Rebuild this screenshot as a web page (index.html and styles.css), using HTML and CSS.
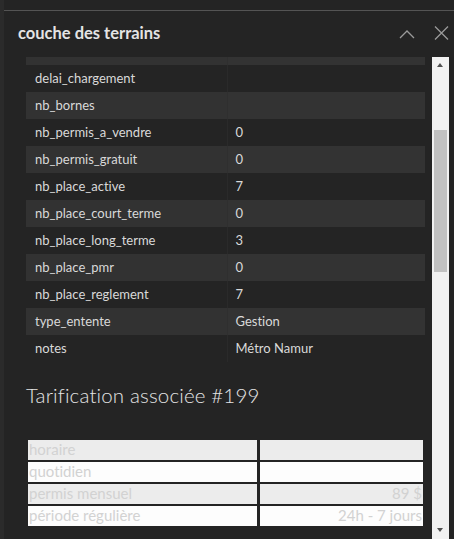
FILE: index.html
```html
<!DOCTYPE html>
<html lang="fr">
<head>
<meta charset="utf-8">
<title>couche des terrains</title>
<link rel="stylesheet" href="styles.css">
</head>
<body>
<div class="rail"></div>
<div class="panel">
  <div class="topbar"></div>
  <div class="header">
    <h1 class="title">couche des terrains</h1>
    <div class="actions">
      <svg class="ico chev" width="16" height="10" viewBox="0 0 16 10"><path d="M1 9 L8 2 L15 9" fill="none" stroke="#9a9a9a" stroke-width="1.3"/></svg>
      <svg class="ico close" width="15" height="14" viewBox="0 0 15 14"><path d="M1 0.5 L14 13.5 M14 0.5 L1 13.5" fill="none" stroke="#9a9a9a" stroke-width="1.3"/></svg>
    </div>
  </div>
  <div class="body">
    <div class="content">
      <div class="scroller">
        <table class="attrs">
          <tr class="partial"><td></td><td></td></tr>
          <tr><td>delai_chargement</td><td></td></tr>
          <tr><td>nb_bornes</td><td></td></tr>
          <tr><td>nb_permis_a_vendre</td><td>0</td></tr>
          <tr><td>nb_permis_gratuit</td><td>0</td></tr>
          <tr><td>nb_place_active</td><td>7</td></tr>
          <tr><td>nb_place_court_terme</td><td>0</td></tr>
          <tr><td>nb_place_long_terme</td><td>3</td></tr>
          <tr><td>nb_place_pmr</td><td>0</td></tr>
          <tr><td>nb_place_reglement</td><td>7</td></tr>
          <tr><td>type_entente</td><td>Gestion</td></tr>
          <tr><td>notes</td><td>Métro Namur</td></tr>
        </table>
        <h2 class="subtitle">Tarification associée #199</h2>
        <div class="tarifs">
          <div class="cell grey">horaire</div><div class="cell grey num"></div>
          <div class="cell white">quotidien</div><div class="cell white num"></div>
          <div class="cell grey">permis mensuel</div><div class="cell grey num">89 $</div>
          <div class="cell white">période régulière</div><div class="cell white num">24h - 7 jours</div>
        </div>
      </div>
    </div>
    <div class="scrollbar">
      <div class="arrow up"></div>
      <div class="track"><div class="thumb"></div></div>
      <div class="arrow down"></div>
    </div>
    <div class="edge"></div>
  </div>
</div>
</body>
</html>
```

FILE: styles.css
```css
* { box-sizing: border-box; }
html, body { margin: 0; padding: 0; }
body {
  width: 454px;
  height: 539px;
  overflow: hidden;
  background: #242424;
  display: flex;
  font-family: "Lato", "Open Sans", sans-serif;
  font-variant-ligatures: none;
  color: #d9d9d9;
}
.rail {
  width: 4px;
  background: #2b2b2b;
  flex: none;
}
.panel {
  flex: 1;
  display: flex;
  flex-direction: column;
  min-width: 0;
}
.topbar {
  height: 11px;
  border-bottom: 1px solid #545454;
  flex: none;
}
.header {
  height: 46px;
  flex: none;
  display: flex;
  align-items: center;
  justify-content: space-between;
  padding: 0 5px 2px 14px;
}
.title {
  margin: 0;
  font-size: 16.5px;
  font-weight: 700;
  color: #e4e4e4;
}
.actions {
  display: flex;
  align-items: center;
  gap: 19px;
}
.ico { display: block; }
.chev { margin-top: 1px; }
.body {
  flex: 1;
  display: flex;
  min-height: 0;
}
.content {
  width: 428px;
  flex: none;
  overflow: hidden;
}
.scroller {
  padding: 0 7px 0 22px;
}
.attrs {
  width: 399px;
  border-collapse: collapse;
  font-size: 13px;
  color: #d9d9d9;
}
.attrs td {
  height: 27px;
  padding: 0 0 2px 9px;
  vertical-align: middle;
}
.attrs tr.partial td { height: 8px; padding: 0; }
.attrs td:first-child { width: 201px; }
.attrs td:last-child { padding-left: 8px; border-left: 1px solid #2a2a2a; }
.attrs tr:nth-child(odd) td { background: #323232; }
.attrs tr:nth-child(even) td { background: #242424; }
.attrs tr:nth-child(odd) td:last-child { background: #333333; border-left-color: #2f2f2f; }
.subtitle {
  margin: 21px 0 0 0;
  height: 57px;
  font-size: 20.5px;
  font-weight: 300;
  letter-spacing: 0.15px;
  color: #e4e4e4;
}
.tarifs {
  margin-left: 2px;
  width: 395px;
  display: grid;
  grid-template-columns: 229px 163px;
  grid-auto-rows: 20px;
  column-gap: 3px;
  row-gap: 2px;
  font-size: 15px;
  color: #d2d2d2;
}
.cell {
  padding: 0 1px;
  line-height: 19px;
  white-space: nowrap;
}
.cell.grey { background: #ececec; }
.cell.white { background: #fdfdfd; }
.cell.num { text-align: right; }
.scrollbar {
  width: 17px;
  flex: none;
  background: #f1f1f1;
  display: flex;
  flex-direction: column;
}
.arrow {
  height: 17px;
  flex: none;
  position: relative;
}
.arrow.up::after, .arrow.down::after {
  content: "";
  position: absolute;
  left: 5px;
  width: 0;
  height: 0;
  border-left: 3.5px solid transparent;
  border-right: 3.5px solid transparent;
}
.arrow.up::after { top: 6px; border-bottom: 4px solid #505050; }
.arrow.down::after { top: 6px; border-top: 4px solid #505050; }
.track {
  flex: 1;
  padding: 56px 2px 0 2px;
}
.thumb {
  height: 142px;
  background: #c1c1c1;
}
.edge {
  flex: 1;
  background: #232323;
}
```
